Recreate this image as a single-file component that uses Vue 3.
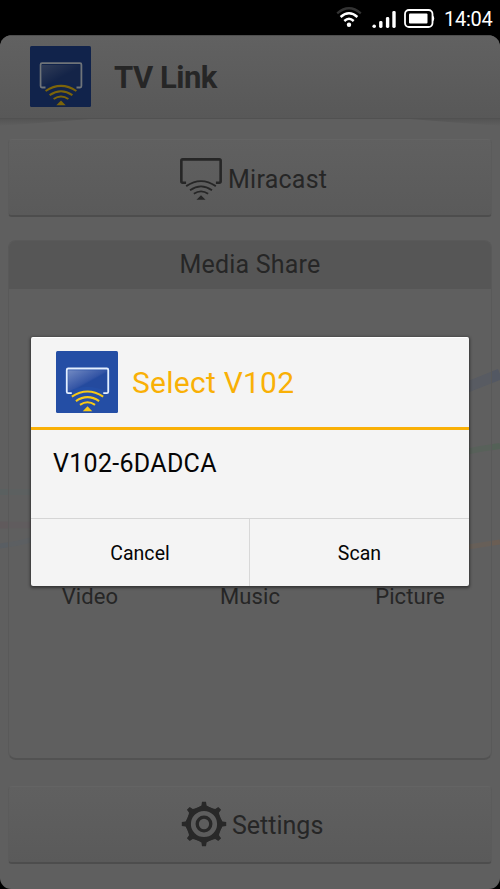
<script setup>
import { h } from 'vue'

const tiles = ['Video', 'Music', 'Picture']
const teeth = [0, 45, 90, 135, 180, 225, 270, 315]

const CastGlyph = (props) =>
  h('g', { fill: 'none', 'stroke-linejoin': 'round' }, [
    h('path', { d: 'M15.5 41.5H12Q10.6 41.5 10.6 40V18.7Q10.6 17.2 12 17.2H50Q51.4 17.2 51.4 18.7V40Q51.4 41.5 50 41.5H46.5', stroke: props.frame, 'stroke-width': props.frameWidth }),
    h('path', { d: 'M15.6 45Q31 34.7 46.4 45M19.6 49.2Q31 41.4 42.4 49.2M23.6 53Q31 47.9 38.4 53', stroke: props.wave, 'stroke-width': props.waveWidth }),
    h('path', { d: 'M31 54.4L35.7 59.2H26.3Z', fill: props.wave })
  ])
CastGlyph.props = ['frame', 'wave', 'frameWidth', 'waveWidth']
</script>

<template>
  <div class="phone">
    <div class="status">
      <svg class="wifi" width="26" height="22" viewBox="0 0 26 22" fill="none">
        <path d="M1.2 6.4Q13 -3.8 24.8 6.4" stroke="#333" stroke-width="2.3" />
        <path d="M4.6 10Q13 2.5 21.4 10M8.3 14Q13 9.7 17.7 14" stroke="#fff" stroke-width="2.4" />
        <circle cx="13" cy="17.8" r="2.2" fill="#fff" />
      </svg>
      <svg class="signal" width="25" height="18" viewBox="0 0 25 18" fill="#fff">
        <circle cx="2.2" cy="15.2" r="1.8" />
        <rect x="7.1" y="10" width="3.4" height="7" rx="1.4" />
        <rect x="13.9" y="6" width="3.4" height="11" rx="1.4" />
        <rect x="20.3" y="0" width="3.4" height="17" rx="1.4" />
      </svg>
      <svg class="battery" width="32" height="20" viewBox="0 0 32 20">
        <rect x="1" y="1" width="27.5" height="17" rx="4" fill="none" stroke="#fff" stroke-width="1.8" />
        <rect x="5" y="4.5" width="18.5" height="10" rx="1" fill="#fff" />
        <path d="M29 6.5Q31.5 9.5 29 12.5Z" fill="#fff" />
      </svg>
      <span class="clock">14:04</span>
    </div>

    <div class="app">
      <svg class="ribbons" width="500" height="853" viewBox="0 36 500 853" fill="none">
        <path d="M465 388L500 374" stroke="#535863" stroke-width="11" />
        <path d="M465 452L480 449L500 446" stroke="#546157" stroke-width="6" />
        <path d="M465 547.5L500 542" stroke="#6b5e54" stroke-width="5" />
        <path d="M0 492H35" stroke="#5a6060" stroke-width="6" />
        <path d="M0 525H35" stroke="#605a5c" stroke-width="7" />
        <path d="M0 546Q17 544 35 539" stroke="#595e63" stroke-width="5" />
      </svg>
      <header class="bar">
        <svg class="logo" width="61" height="61" viewBox="0 0 61 61">
          <defs><linearGradient id="dimglass" x2="1" y2="1"><stop stop-color="#303c57" /><stop offset=".55" stop-color="#142448" /></linearGradient></defs>
          <rect width="61" height="61" rx="1.5" fill="#11234b" />
          <path d="M12 19H50V40Q31 31 12 40Z" fill="url(#dimglass)" />
          <CastGlyph frame="#6f7479" wave="#7c640a" :frame-width="1.8" :wave-width="2.1" />
        </svg>
        <h1>TV Link</h1>
      </header>
      <svg class="curl" width="500" height="8" viewBox="0 0 500 8">
        <defs><linearGradient id="shade" x2="0" y2="1"><stop stop-color="#545454" /><stop offset="1" stop-color="#5f5f5f" /></linearGradient></defs>
        <path d="M0 0H90L0 7ZM500 0H410L500 7Z" fill="url(#shade)" />
      </svg>

      <main>
        <div class="button">
          <svg width="42" height="42" viewBox="9.5 15.8 43 43.6">
            <CastGlyph frame="#262626" wave="#262626" :frame-width="2.7" :wave-width="1.9" />
          </svg>
          <span class="miracast">Miracast</span>
        </div>
        <section class="share">
          <h2>Media Share</h2>
          <div class="tiles"><span v-for="t in tiles" :key="t">{{ t }}</span></div>
        </section>
        <div class="button settings">
          <svg width="46" height="46" viewBox="-23 -23 46 46" fill="none">
            <circle r="15.4" stroke="#282828" stroke-width="4.6" />
            <circle r="6.8" stroke="#282828" stroke-width="3.3" />
            <path v-for="a in teeth" :key="a" d="M-6.5 -16.2L-2.6 -18.5L-2 -22.2H2L2.6 -18.5L6.5 -16.2Z" fill="#282828" :transform="`rotate(${a})`" />
          </svg>
          <span class="settings-label">Settings</span>
        </div>
      </main>
    </div>

    <div class="dialog">
      <div class="title">
        <svg class="logo" width="62" height="62" viewBox="0 0 61 61">
          <defs><linearGradient id="glass" x2="1" y2="1"><stop stop-color="#7189c2" /><stop offset=".5" stop-color="#3455a5" /><stop offset=".55" stop-color="#244a9e" /></linearGradient></defs>
          <rect width="61" height="61" rx="1.5" fill="#244ea5" />
          <path d="M12 19H50V40Q31 31 12 40Z" fill="url(#glass)" />
          <CastGlyph frame="#e4efff" wave="#f6c916" :frame-width="1.8" :wave-width="2.1" />
        </svg>
        <span class="title-label">Select V102</span>
      </div>
      <div class="device"><span>V102-6DADCA</span></div>
      <div class="actions"><button>Cancel</button><button>Scan</button></div>
    </div>
  </div>
</template>

<style>
body { background: #000; }
</style>

<style scoped>
* { box-sizing: border-box; }
svg { display: block; flex: none; }
.phone { position: relative; width: 500px; height: 889px; overflow: hidden; background: #000; font-family: Roboto, sans-serif; color: #262626; }
.status { height: 35px; display: flex; align-items: flex-start; padding-left: 336px; color: #fff; }
.wifi { margin-top: 7px; }
.signal { margin: 11px 0 0 10px; }
.battery { margin: 9px 0 0 7px; }
.clock { margin: 8px 0 0 8px; font-size: 20px; line-height: 23px; letter-spacing: -0.25px; white-space: nowrap; }
.app { position: relative; height: 854px; border-radius: 12px 12px 11px 11px; background: #5f5f5f; overflow: hidden; }
.ribbons { position: absolute; left: 0; top: 1px; }
.bar { position: relative; height: 84px; padding: 10px 30px 0; display: flex; align-items: flex-start; gap: 23px; background: linear-gradient(#616161, #585858); border-top: 1px solid #4e4e4e; border-bottom: 1px solid #515151; }
h1 { margin: 13px 0 0; font-size: 31px; line-height: 38px; font-weight: 700; letter-spacing: -0.5px; }
.curl { margin-bottom: -8px; }
main { position: relative; padding: 20px 8px 0; }
.button { height: 78px; display: flex; padding: 18px 0 0 171px; border: 1px solid #5b5b5b; border-top-color: #646464; border-bottom: 2px solid #4d4d4d; border-radius: 4px; background: linear-gradient(#606060, #5a5a5a); font-size: 25px; line-height: 30px; }
.miracast { margin: 7px 0 0 6px; letter-spacing: 0.25px; }
.share { height: 520px; margin-top: 23px; border-radius: 8px; border: 1px solid #595959; border-bottom: 2px solid #525252; overflow: hidden; background: rgba(98, 98, 98, 0.35); }
h2 { margin: 0; height: 48px; padding-top: 9px; text-align: center; font-size: 25px; line-height: 30px; font-weight: 400; letter-spacing: 0.2px; background: #565656; }
.tiles { display: grid; grid-template-columns: repeat(3, 160px); justify-content: center; padding-top: 294px; text-align: center; font-size: 22px; line-height: 28px; letter-spacing: 0.1px; }
.settings { margin-top: 26px; padding: 14px 0 0 172px; }
.settings-label { margin: 10px 0 0 5px; letter-spacing: 0; }
.dialog { position: absolute; left: 31px; top: 337px; width: 438px; height: 249px; display: flex; flex-direction: column; background: #f4f4f4; border-radius: 2px; border-top: 1px solid #fff; box-shadow: 0 1px 3px 1px rgba(0, 0, 0, 0.45); }
.title { height: 92px; display: flex; padding: 13px 24px 0 25px; gap: 14px; border-bottom: 3px solid #f9b006; color: #f9b006; font-size: 30px; line-height: 38px; }
.title-label { margin-top: 13px; letter-spacing: 0.25px; }
.device { height: 89px; padding: 18px 22px; border-bottom: 1px solid #d5d5d5; color: #050505; font-size: 25px; line-height: 32px; letter-spacing: 0.3px; }
.actions { flex: 1; display: grid; grid-template-columns: 219px 1fr; }
button { border: 0; background: none; font: 400 19.5px/24px Roboto, sans-serif; letter-spacing: 0.05px; color: #050505; padding: 2px 0 0; }
button:first-child { border-right: 1px solid #d8d8d8; }
</style>
